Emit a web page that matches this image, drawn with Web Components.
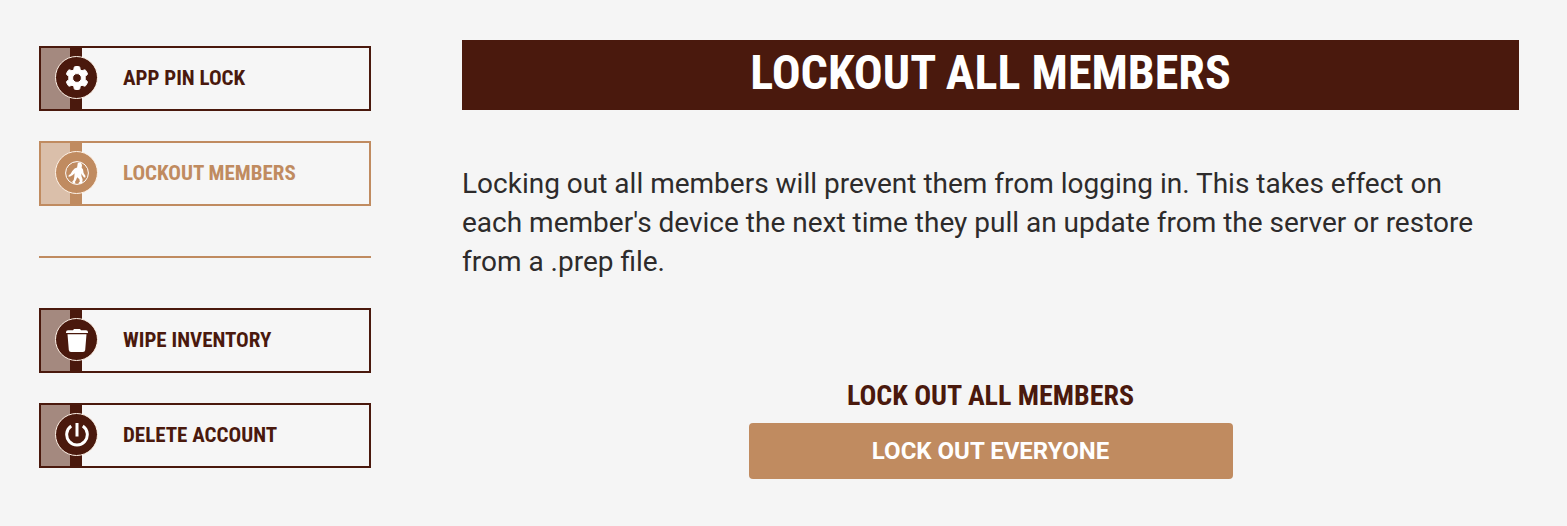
<!DOCTYPE html>
<html lang="en">
<head>
  <meta charset="UTF-8">
  <meta name="viewport" content="width=device-width, initial-scale=1.0">
  <title>Lockout All Members</title>
  <style>
    body {
      margin: 0;
      background: #f5f5f5;
      color: #2d2b2b;
      font-family: Roboto, "Liberation Sans", sans-serif;
      --dark: #4a190d;
      --tan: #c08b60;
      --display: "Roboto Condensed", Roboto, sans-serif;
    }
  </style>
</head>
<body>
  <settings-page>
    <nav-item slot="nav" label="App Pin Lock">
      <svg viewBox="0 0 24 24" fill="currentColor"><path stroke="currentColor" stroke-width="1" d="M9.200 1.500q.2-1 1.200-1h3.200q1 0 1.200 1l.4 2.300 1.800 1 2.300-.9q.9-.3 1.400.5l1.700 2.900q.5.900-.3 1.500l-1.900 1.500v3.400l1.900 1.500q.8.600.3 1.500l-1.700 2.900q-.5.800-1.400.5l-2.300-.9-1.800 1-.4 2.300q-.2 1-1.200 1h-3.200q-1 0-1.200-1l-.4-2.300-1.800-1-2.300.9q-.9.300-1.400-.5l-1.700-2.900q-.5-.9.300-1.500l1.900-1.500v-3.400L1.900 8.800q-.8-.6-.3-1.500l1.700-2.900q.5-.8 1.400-.5l2.300.9 1.800-1zM12 7.600a4.400 4.400 0 1 0 0 8.800 4.400 4.400 0 0 0 0-8.800z"/></svg>
    </nav-item>
    <nav-item slot="nav" label="Lockout Members" active>
      <svg viewBox="0 0 24 24" fill="currentColor"><circle cx="12" cy="12" r="11.400" fill="none" stroke="currentColor" stroke-width="1"/><path d="M12.800 2l2.200-.5 1.600 1 .4 2.300-.4 1.700 1.400 2 .6 3.500 1.900 3-.3 1.700-1.400-.4-1.700-2.500-.6-1.500-.1 2.700 1.200 3.200-.3 3.900-3.600.8.100-1.300 1-.8-.4-2.500-2.200-2-1.200 2.900-.9 1.300.2 2.200-2.700-.7-.3-1.400 1.400-1.600.6-3.200.3-3.500-1.800 1.800-2.600 1.500-1.700.2.200-1.500 1.800-1.200 1.800-3 2.300-2.500 2.500-1.200z"/></svg>
    </nav-item>
    <hr slot="nav">
    <nav-item slot="nav" label="Wipe Inventory">
      <svg viewBox="0 0 24 24" fill="currentColor"><path d="M1 4.300q0-2.100 2-2.100h5l1-1.300h6l1 1.300h5q2 0 2 2.100v.7H1zM2.500 6.200h19L20.200 22q-.2 2-2.200 2H6q-2 0-2.200-2z"/></svg>
    </nav-item>
    <nav-item slot="nav" label="Delete Account">
      <svg viewBox="0 0 24 24" fill="none" stroke="currentColor" stroke-width="3"><path d="M12 0v13.500M6.200 3.100a10.300 10.300 0 1 0 11.600 0"/></svg>
    </nav-item>

    <page-title>Lockout All Members</page-title>
    <p>Locking out all members will prevent them from logging in. This takes effect on each member's device the next time they pull an update from the server or restore from a .prep file.</p>
    <action-box heading="Lock Out All Members">Lock Out Everyone</action-box>
  </settings-page>

  <template id="pageTpl">
    <style>
      :host {
        display: flex;
        gap: 91px;
        padding: 40px 48px 40px 39px;
      }
      nav {
        flex: 0 0 332px;
        display: flex;
        flex-direction: column;
        gap: 30px;
        padding-top: 6px;
      }
      main {
        flex: 1;
        min-width: 0;
      }
      ::slotted(hr) {
        width: 100%;
        height: 2px;
        margin: 20px 0;
        border: 0;
        background: var(--tan);
      }
      ::slotted(p) {
        margin: 54px 0 96px;
        padding-right: 24px;
        font-size: 28px;
        line-height: 39px;
      }
    </style>
    <nav><slot name="nav"></slot></nav>
    <main><slot></slot></main>
  </template>

  <template id="navItemTpl">
    <style>
      :host {
        display: block;
        --tone: var(--dark);
        --shade: #a4897f;
      }
      :host([active]) {
        --tone: var(--tan);
        --shade: #dabfaa;
      }
      button {
        display: flex;
        align-items: center;
        gap: 25px;
        box-sizing: border-box;
        width: 100%;
        height: 65px;
        padding: 0;
        border: 2px solid var(--tone);
        background: #f6f6f6;
        color: var(--tone);
        font: bold 21px var(--display);
        text-transform: uppercase;
        text-align: left;
        white-space: nowrap;
        cursor: pointer;
      }
      .badge, .label {
        box-sizing: border-box;
        padding-bottom: 2px;
      }
      .badge {
        display: flex;
        align-items: center;
        justify-content: flex-end;
        width: 57px;
        height: 100%;
        background: linear-gradient(to right, var(--shade) 29px, var(--tone) 29px, var(--tone) 41px, transparent 41px);
      }
      .circle {
        display: grid;
        place-items: center;
        width: 41px;
        height: 41px;
        border: 1px solid #fff3e8;
        border-radius: 50%;
        background: var(--tone);
        color: #fff;
      }
      ::slotted(svg) {
        width: 24px;
        height: 24px;
      }
    </style>
    <button type="button">
      <span class="badge"><span class="circle"><slot></slot></span></span>
      <span class="label"></span>
    </button>
  </template>

  <template id="titleTpl">
    <style>
      :host {
        display: block;
        padding-bottom: 4px;
        background: var(--dark);
        color: #fff;
      }
      h1 {
        margin: 0;
        font: bold 48px/66px var(--display);
        text-align: center;
        text-transform: uppercase;
      }
    </style>
    <h1><slot></slot></h1>
  </template>

  <template id="actionTpl">
    <style>
      :host {
        display: block;
        max-width: 484px;
        margin: 0 auto;
        text-align: center;
      }
      h2 {
        margin: 0 0 8px;
        color: var(--dark);
        font: bold 28px/38px var(--display);
        text-transform: uppercase;
      }
      button {
        display: block;
        width: 100%;
        height: 56px;
        border: 0;
        border-radius: 4px;
        background: var(--tan);
        color: #fff;
        font: bold 24px Roboto, sans-serif;
        text-transform: uppercase;
        cursor: pointer;
      }
    </style>
    <h2></h2>
    <button type="button"><slot></slot></button>
  </template>

<script>
  function attach(el, id) {
    const shadow = el.attachShadow({mode: 'open'});
    shadow.appendChild(document.getElementById(id).content.cloneNode(true));
    return shadow;
  }

  class SettingsPage extends HTMLElement {
    constructor() {
      super();
      attach(this, 'pageTpl');
    }
  }

  class NavItem extends HTMLElement {
    constructor() {
      super();
      const shadow = attach(this, 'navItemTpl');
      shadow.querySelector('.label').textContent = this.getAttribute('label');
    }
  }

  class PageTitle extends HTMLElement {
    constructor() {
      super();
      attach(this, 'titleTpl');
    }
  }

  class ActionBox extends HTMLElement {
    constructor() {
      super();
      const shadow = attach(this, 'actionTpl');
      shadow.querySelector('h2').textContent = this.getAttribute('heading');
    }
  }

  customElements.define('settings-page', SettingsPage);
  customElements.define('nav-item', NavItem);
  customElements.define('page-title', PageTitle);
  customElements.define('action-box', ActionBox);
</script>
</body>
</html>
